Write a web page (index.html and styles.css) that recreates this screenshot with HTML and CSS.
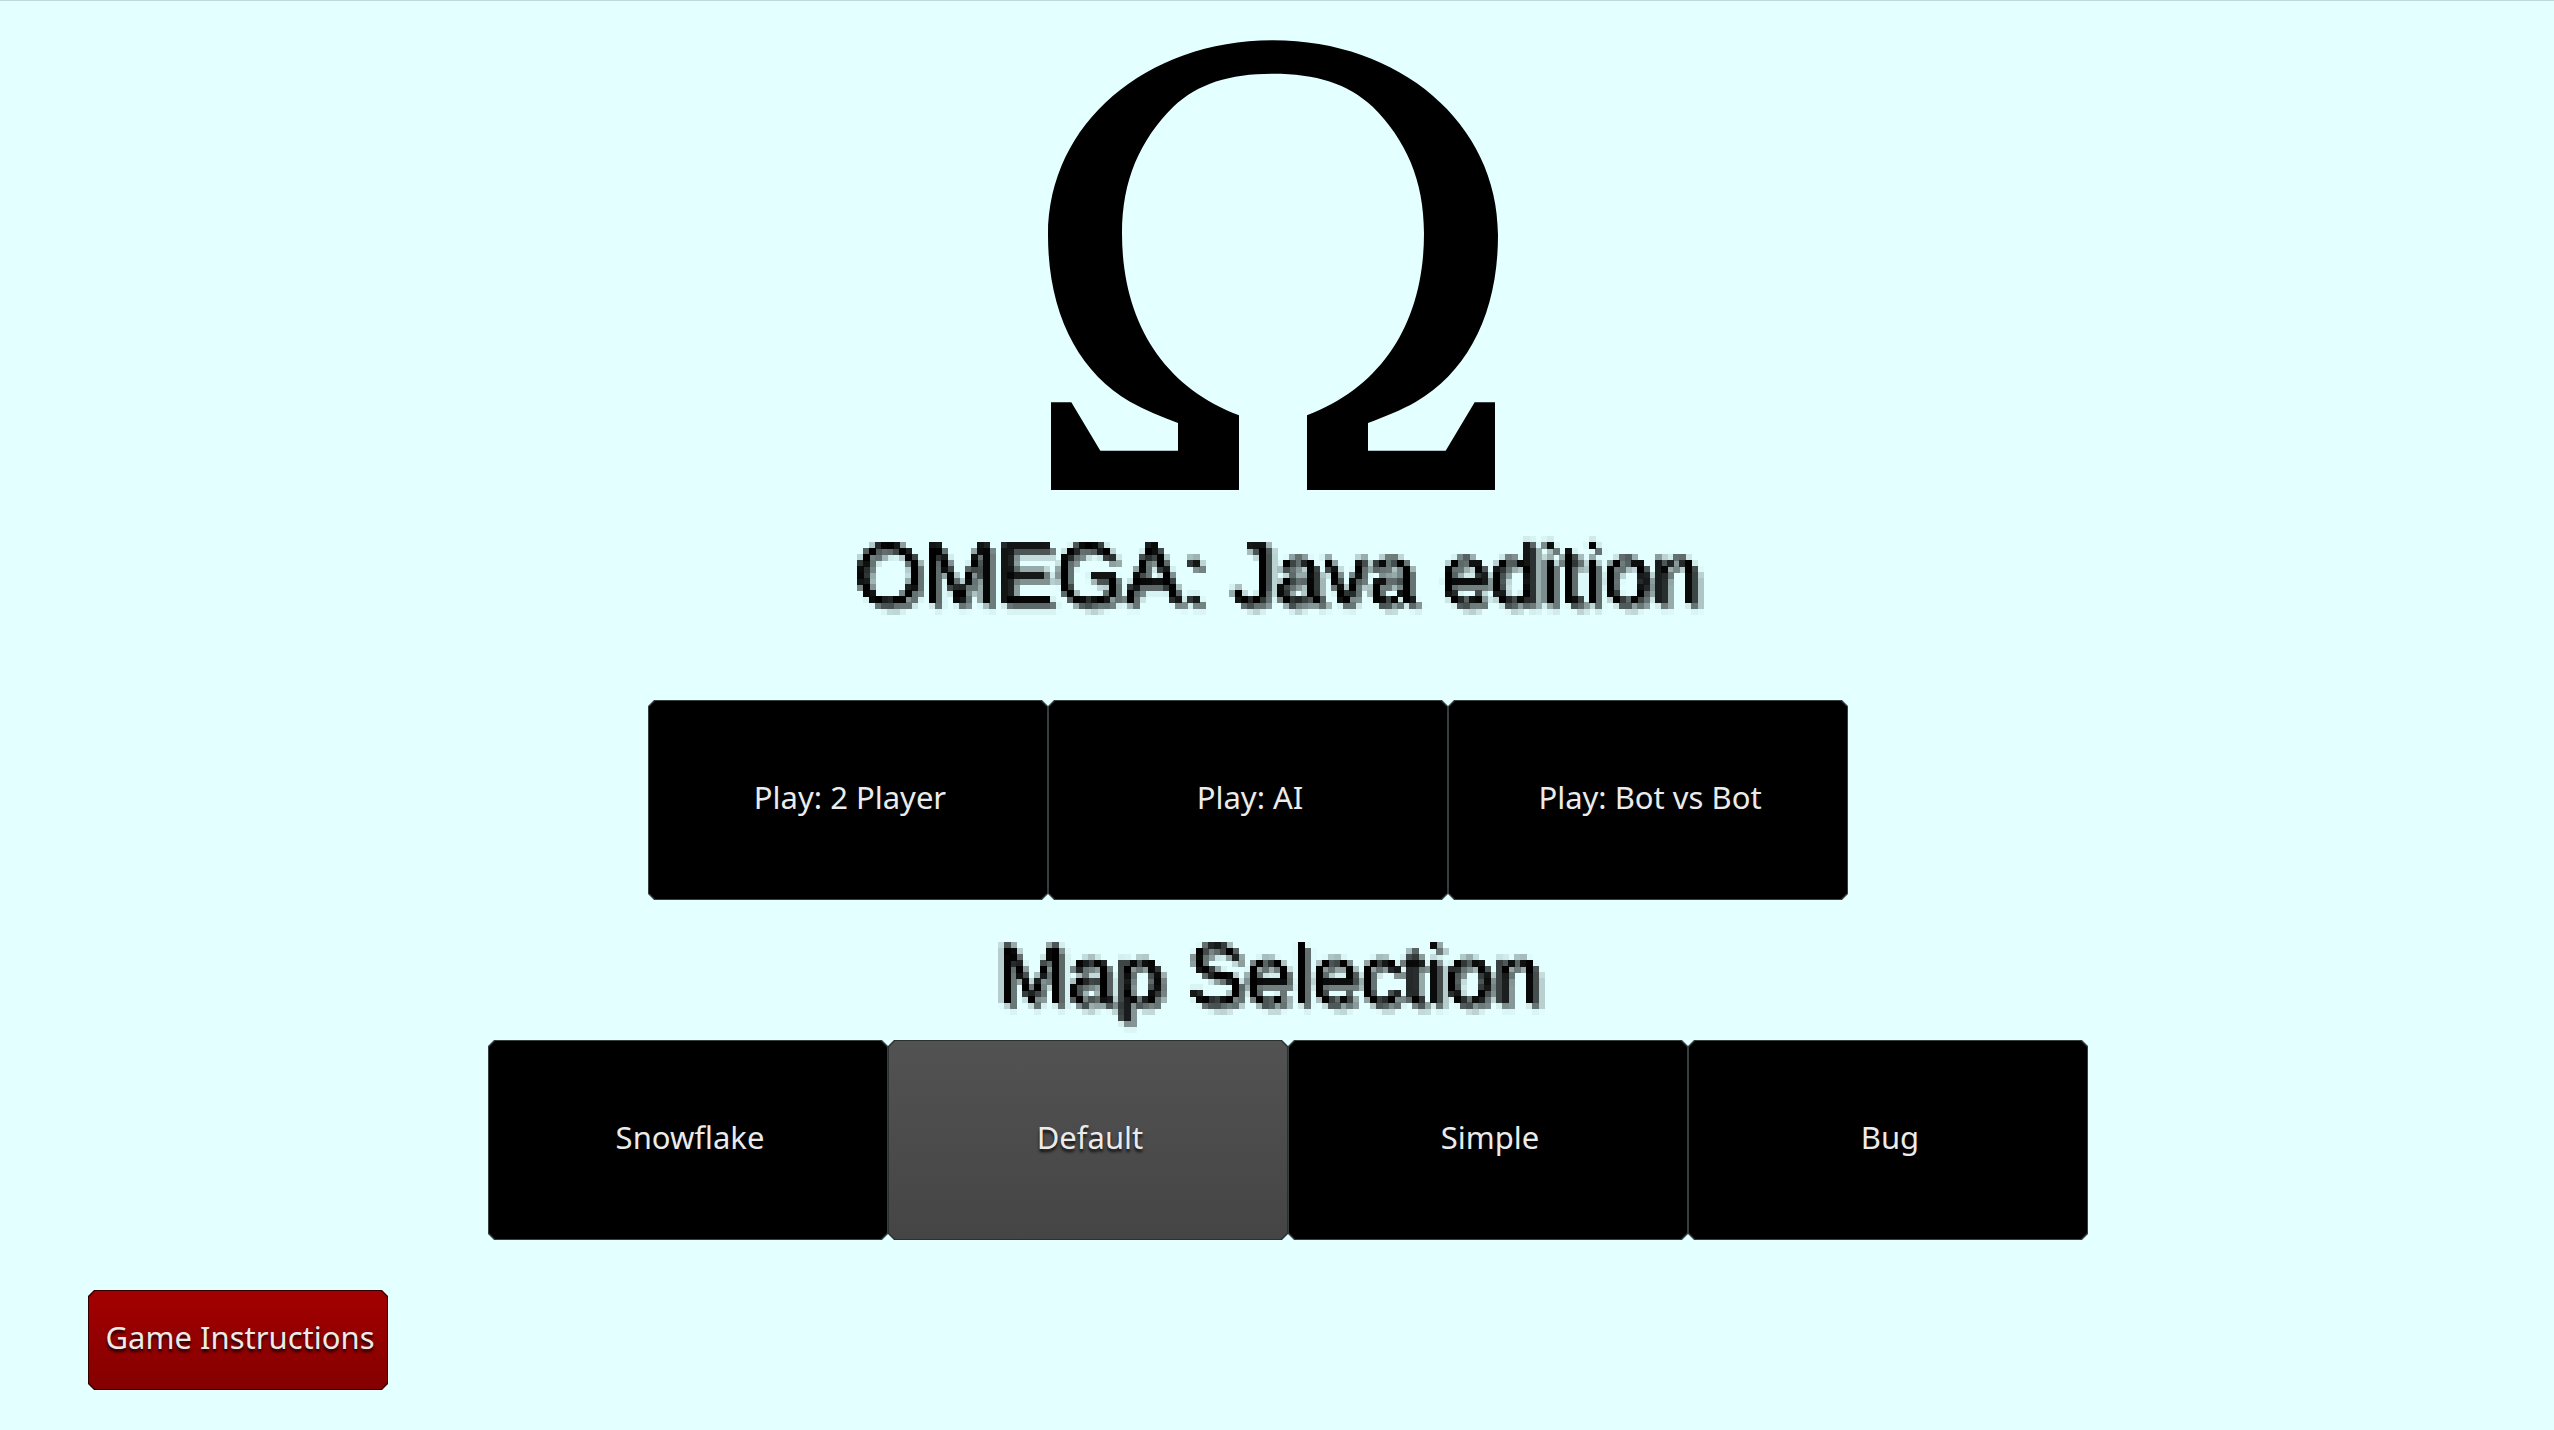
FILE: index.html
```html
<!DOCTYPE html>
<html lang="en">
<head>
<meta charset="utf-8">
<meta name="viewport" content="width=device-width, initial-scale=1">
<title>OMEGA: Java edition</title>
<link rel="stylesheet" href="styles.css">
</head>
<body>
<svg class="defs" width="0" height="0" aria-hidden="true">
  <!-- Samples the text once per 6px cell and fills the cell with that sample -->
  <filter id="pixels" filterUnits="userSpaceOnUse" primitiveUnits="userSpaceOnUse" x="0" y="0" width="900" height="120" color-interpolation-filters="sRGB">
    <feGaussianBlur in="SourceGraphic" stdDeviation="1" result="soft"/>
    <feFlood x="3" y="3" width="1" height="1" flood-color="#000" result="dot"/>
    <feOffset in="dot" dx="0" dy="0" x="0" y="0" width="6" height="6" result="cell"/>
    <feTile in="cell" result="grid"/>
    <feComposite in="soft" in2="grid" operator="in"/>
    <feMorphology operator="dilate" radius="3"/>
  </filter>
</svg>
<main class="menu">
  <svg class="logo" viewBox="0 0 1470 1470" role="img" aria-label="Omega">
    <path d="M63 1147H124L211 1292H444V1209C395 1190 345 1171 300 1145C145 1055 54 880 54 645C54 310 350 61 729 61C1108 61 1404 310 1404 645C1404 880 1313 1055 1158 1145C1113 1171 1063 1190 1014 1209V1292H1247L1334 1147H1395V1410H831V1186C1058 1100 1182 905 1182 640C1182 480 1128 360 1028 260C953 190 858 161 729 161C600 161 505 190 430 260C330 360 276 480 276 640C276 905 400 1100 627 1186V1410H63Z"/>
  </svg>
  <h1 class="title">OMEGA: Java edition</h1>
  <div class="row row-play">
    <button class="btn" type="button"><span>Play: 2 Player</span></button>
    <button class="btn" type="button"><span>Play: AI</span></button>
    <button class="btn" type="button"><span>Play: Bot vs Bot</span></button>
  </div>
  <h2 class="title title-map">Map Selection</h2>
  <div class="row row-maps">
    <button class="btn" type="button" aria-pressed="false"><span>Snowflake</span></button>
    <button class="btn btn-selected" type="button" aria-pressed="true"><span>Default</span></button>
    <button class="btn" type="button" aria-pressed="false"><span>Simple</span></button>
    <button class="btn" type="button" aria-pressed="false"><span>Bug</span></button>
  </div>
  <button class="btn btn-help" type="button"><span>Game Instructions</span></button>
</main>
</body>
</html>
```
FILE: styles.css
```css
* {
  box-sizing: border-box;
}

body {
  margin: 0;
  min-height: 100vh;
  background: #e3ffff;
  border-top: 1px solid #bfd9d9;
}

.defs {
  position: absolute;
}

.menu {
  display: flex;
  flex-direction: column;
  align-items: center;
  padding: 19px 0 40px;
}

.logo {
  width: 490px;
  height: 490px;
  margin-right: 4px;
}

.title {
  width: 900px;
  max-width: 100%;
  margin: 14px 0 0;
  font: 400 88px/100px "Liberation Sans", Arial, sans-serif;
  text-align: center;
  color: #000;
  text-shadow: 6px 6px 0 rgba(0, 0, 0, 0.55);
  filter: url(#pixels);
}

.title-map {
  margin: 24px 18px 0 0;
  font-size: 86px;
}

.row {
  display: flex;
  justify-content: center;
}

.row-play {
  margin: 76px 58px 0 0;
}

.row-maps {
  margin: 16px 0 0 22px;
}

.btn {
  --edge: #363f3f;
  --fill: #000;
  --cut: polygon(6px 0, calc(100% - 6px) 0, 100% 6px, 100% calc(100% - 6px), calc(100% - 6px) 100%, 6px 100%, 0 calc(100% - 6px), 0 6px);
  position: relative;
  width: 400px;
  height: 200px;
  padding: 0 0 6px 4px;
  border: 0;
  background: var(--edge);
  clip-path: var(--cut);
  color: #ebebeb;
  font: 400 31px/46px "Noto Sans", sans-serif;
  text-shadow: 0 3px 3px rgba(0, 0, 0, 0.8);
  cursor: pointer;
}

.btn::before {
  content: "";
  position: absolute;
  inset: 1px;
  background: var(--fill);
  clip-path: var(--cut);
}

.btn span {
  position: relative;
}

.btn-selected {
  --edge: #2b3131;
  --fill: linear-gradient(#525252, #454545);
}

.btn-help {
  --edge: #330000;
  --fill: linear-gradient(#a30000, #850000);
  align-self: flex-start;
  width: 300px;
  height: 100px;
  margin: 50px 0 0 88px;
}
```
